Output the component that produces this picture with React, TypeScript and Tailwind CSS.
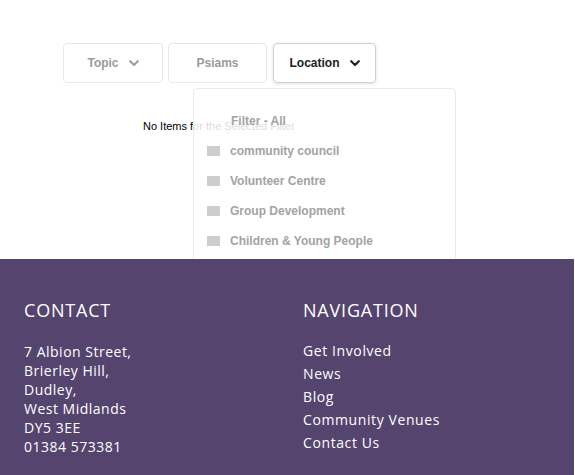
import React from "react";

const Chevron = ({ color }: { color: string }) => (
  <svg width="10" height="7" viewBox="0 0 10 7" fill="none">
    <path d="M1.2 1.2 L5 5 L8.8 1.2" stroke={color} strokeWidth="2.2" strokeLinecap="round" strokeLinejoin="round" />
  </svg>
);

const items = ["community council", "Volunteer Centre", "Group Development", "Children & Young People"];

export default function App() {
  return (
    <div className="w-[575px] h-[475px] overflow-hidden bg-white" style={{ fontFamily: "'Liberation Sans', Arial, sans-serif" }}>
      <div className="relative h-[259px]">
        <div className="flex pl-[63px] pt-[43px] gap-[5px]">
          <div className="w-[100px] h-[40px] border border-[#e8e8e8] rounded-[4px] flex items-center justify-center gap-[10px] text-[12px] font-bold text-[#9a9a9a]">
            <span>Topic</span>
            <Chevron color="#a0a0a0" />
          </div>
          <div className="w-[99px] h-[40px] border border-[#e8e8e8] rounded-[4px] flex items-center justify-center text-[12px] font-bold text-[#9a9a9a]">
            <span>Psiams</span>
          </div>
          <div className="ml-[1px] w-[103px] h-[40px] border border-[#cfcfcf] rounded-[4px] flex items-center justify-center gap-[10px] text-[12px] font-bold text-[#222] shadow-[0_1px_3px_rgba(0,0,0,0.12)]">
            <span>Location</span>
            <Chevron color="#222" />
          </div>
        </div>
        <div className="pl-[143px] pt-[37px] text-[11px] text-black leading-[13px]">No Items for the Selected Filter</div>
        <div className="absolute left-[193px] top-[88px] w-[263px] h-[200px] bg-white/85 border border-[#e9e9e9] rounded-[5px] pl-[13px] pt-[24px] text-[12px] font-bold text-[#a3a3a3]">
          <div className="pl-[24px] h-[16px] leading-[16px]">Filter - All</div>
          <div className="flex flex-col gap-[14px] mt-[14px]">
            {items.map((t) => (
              <div key={t} className="flex items-center h-[16px] gap-[10px]">
                <span className="w-[13px] h-[10px] bg-[#cdcdcd]" />
                <span className="leading-[16px]">{t}</span>
              </div>
            ))}
          </div>
        </div>
      </div>
      <div className="relative w-[574px] h-[216px] bg-[#54446e] text-white flex pl-[24px] pt-[40px]" style={{ fontFamily: "'Open Sans', sans-serif" }}>
        <div className="w-[279px]">
          <div className="text-[18px] leading-[22px] tracking-[0.8px]">CONTACT</div>
          <div className="mt-[21px] text-[14px] leading-[19px] font-medium tracking-[0.5px]">
            <div>7 Albion Street,</div>
            <div>Brierley Hill,</div>
            <div>Dudley,</div>
            <div>West Midlands</div>
            <div>DY5 3EE</div>
            <div>01384 573381</div>
            <div className="mt-[17px]">Privacy Notice</div>
          </div>
        </div>
        <div>
          <div className="text-[18px] leading-[22px] tracking-[0.8px]">NAVIGATION</div>
          <div className="mt-[18px] text-[14px] leading-[23px] font-medium tracking-[0.6px] flex flex-col">
            <span>Get Involved</span>
            <span>News</span>
            <span>Blog</span>
            <span>Community Venues</span>
            <span>Contact Us</span>
          </div>
        </div>
      </div>
    </div>
  );
}
